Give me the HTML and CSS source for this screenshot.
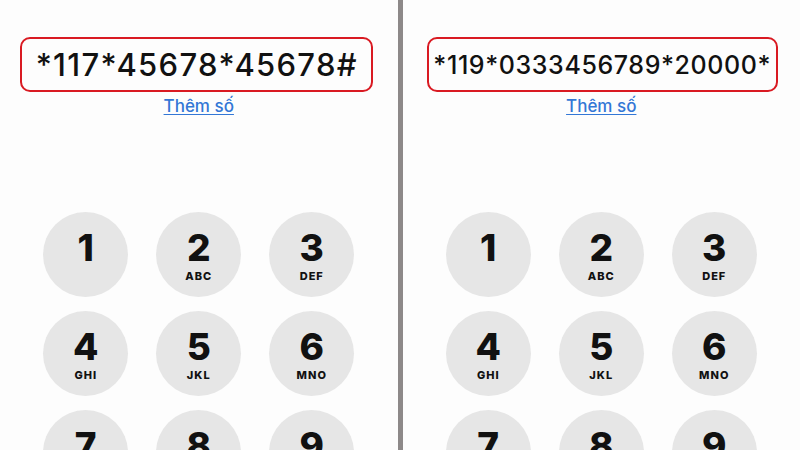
FILE: index.html
```html
<!DOCTYPE html>
<html lang="vi">
<head>
    <meta charset="UTF-8">
    <meta name="viewport" content="width=device-width, initial-scale=1.0">
    <title>Bàn phím gọi</title>
    <link rel="stylesheet" href="styles.css">
</head>
<body>

<div class="screens">
    <!-- màn hình bên trái -->
    <div class="dialer">
        <div class="number-box">
            <span class="number">*117*45678*45678#</span>
        </div>
        <a class="add-number" href="#">Thêm số</a>
        <div class="keypad">
            <div class="key"><span class="digit">1</span></div>
            <div class="key"><span class="digit">2</span><span class="letters">ABC</span></div>
            <div class="key"><span class="digit">3</span><span class="letters">DEF</span></div>
            <div class="key"><span class="digit">4</span><span class="letters">GHI</span></div>
            <div class="key"><span class="digit">5</span><span class="letters">JKL</span></div>
            <div class="key"><span class="digit">6</span><span class="letters">MNO</span></div>
            <div class="key"><span class="digit">7</span><span class="letters">PQRS</span></div>
            <div class="key"><span class="digit">8</span><span class="letters">TUV</span></div>
            <div class="key"><span class="digit">9</span><span class="letters">WXYZ</span></div>
        </div>
    </div>

    <div class="divider"></div>

    <!-- màn hình bên phải -->
    <div class="dialer">
        <div class="number-box wide">
            <span class="number small">*119*0333456789*20000*</span>
        </div>
        <a class="add-number" href="#">Thêm số</a>
        <div class="keypad">
            <div class="key"><span class="digit">1</span></div>
            <div class="key"><span class="digit">2</span><span class="letters">ABC</span></div>
            <div class="key"><span class="digit">3</span><span class="letters">DEF</span></div>
            <div class="key"><span class="digit">4</span><span class="letters">GHI</span></div>
            <div class="key"><span class="digit">5</span><span class="letters">JKL</span></div>
            <div class="key"><span class="digit">6</span><span class="letters">MNO</span></div>
            <div class="key"><span class="digit">7</span><span class="letters">PQRS</span></div>
            <div class="key"><span class="digit">8</span><span class="letters">TUV</span></div>
            <div class="key"><span class="digit">9</span><span class="letters">WXYZ</span></div>
        </div>
    </div>
</div>

</body>
</html>
```

FILE: styles.css
```css
body {
    margin: 0;
    font-family: Inter, "Liberation Sans", sans-serif;
    background-color: #fdfdfd;
    color: #111;
    overflow: hidden;
}

.screens {
    display: flex;
    height: 450px;
    overflow: hidden;
}

.dialer {
    flex: 1;
    display: flex;
    flex-direction: column;
    align-items: center;
    padding-top: 37px;
}

.dialer > * {
    flex-shrink: 0;
}

.divider {
    width: 5px;
    background-color: #8d8989;
}

.number-box {
    width: 349px;
    height: 51px;
    border: 2px solid #d91a22;
    border-radius: 10px;
    display: flex;
    align-items: center;
    justify-content: center;
    margin-right: 4px;
}

.number-box.wide {
    width: 347px;
    margin-right: 0;
    margin-left: 2px;
}

.number {
    font-size: 31px;
    font-weight: 500;
    letter-spacing: 1.3px;
}

.number.small {
    font-size: 25px;
    letter-spacing: 0.6px;
}

.add-number {
    margin-top: 4px;
    font-size: 17px;
    line-height: 20px;
    font-weight: 500;
    color: #3377d6;
    text-decoration: underline;
    text-underline-offset: 2px;
}

.keypad {
    margin-top: 96px;
    display: grid;
    grid-template-columns: repeat(3, 85px);
    grid-auto-rows: 85px;
    column-gap: 28px;
    row-gap: 14px;
}

.key {
    border-radius: 50%;
    background-color: #e6e6e6;
    display: flex;
    flex-direction: column;
    align-items: center;
    padding-top: 17px;
    box-sizing: border-box;
}

.digit {
    font-size: 37px;
    font-weight: 800;
    line-height: 38px;
}

.letters {
    font-size: 11px;
    font-weight: 800;
    letter-spacing: 1px;
    line-height: 12px;
    margin-top: 3px;
}
```
